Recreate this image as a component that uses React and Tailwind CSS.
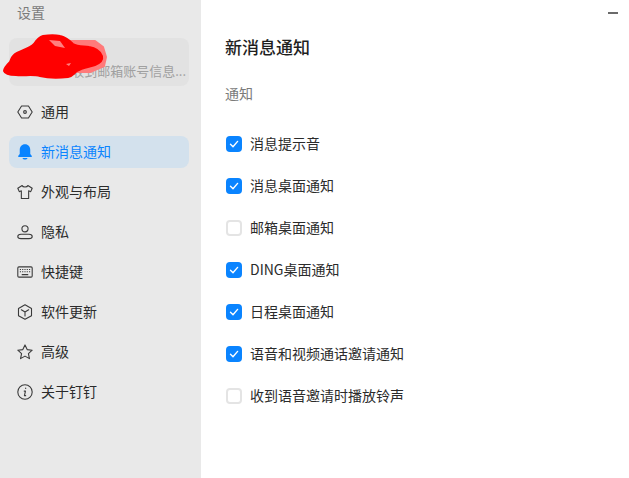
const fontStack = { fontFamily: '"Noto Sans CJK SC", "Liberation Sans", sans-serif' };

function Icon({ children, color = "#3a3a3a" }) {
  return (
    <svg width="16" height="16" viewBox="1 1 14 14" fill="none" stroke={color} strokeWidth="0.95" strokeLinejoin="round" strokeLinecap="round" className="shrink-0">
      {children}
    </svg>
  );
}

const menu = [
  {
    label: "通用",
    icon: (
      <Icon>
        <path d="M5 2.800h6L14.300 8 11 13.200H5L1.700 8z" />
        <circle cx="8" cy="8" r="1.200" />
      </Icon>
    ),
  },
  {
    label: "新消息通知",
    active: true,
    icon: (
      <svg width="16" height="16" viewBox="1 1 14 14" fill="#0a84ff" className="shrink-0">
        <path d="M8 1.300c-2.900 0-4.600 2.200-4.600 4.800v3.600L2 11.600c-.2.400 0 .8.500.8h11c.5 0 .7-.4.500-.8l-1.400-1.900V6.100c0-2.600-1.700-4.800-4.600-4.800z" />
        <path d="M5.800 13.200h4.400c-.3.900-1.100 1.400-2.200 1.400s-1.900-.5-2.200-1.400z" />
      </svg>
    ),
  },
  {
    label: "外观与布局",
    icon: (
      <Icon>
        <path d="M5.500 2.300 1.700 4.700l1.300 3 1.800-.7v6.700h6.400V7l1.800.7 1.300-3-3.800-2.400C10 4 6 4 5.500 2.300z" />
      </Icon>
    ),
  },
  {
    label: "隐私",
    icon: (
      <Icon>
        <circle cx="8" cy="5.200" r="2.700" />
        <path d="M4.500 10h7c1.500 0 2.800.9 2.800 2s-1.300 1.800-2.800 1.800h-7c-1.500 0-2.800-.7-2.800-1.800s1.300-2 2.800-2z" />
      </Icon>
    ),
  },
  {
    label: "快捷键",
    icon: (
      <Icon>
        <rect x="1.700" y="3.500" width="12.600" height="9" rx="1" />
        <path d="M3.500 5.800h9M3.500 7.800h9" strokeDasharray="1 1" strokeLinecap="butt" />
        <path d="M5.500 10.300h5" />
      </Icon>
    ),
  },
  {
    label: "软件更新",
    icon: (
      <Icon>
        <path d="M8 1.700 13.700 5v6.200L8 14.400l-5.700-3.200V5z" />
        <path d="M4.800 6 8 8l3.200-2M8 8v3.500" />
      </Icon>
    ),
  },
  {
    label: "高级",
    icon: (
      <Icon>
        <path d="m8 1.800 1.900 4.100 4.400.5-3.300 3 .9 4.400L8 11.600l-3.900 2.200.9-4.400-3.300-3 4.400-.5z" />
      </Icon>
    ),
  },
  {
    label: "关于钉钉",
    icon: (
      <Icon>
        <circle cx="8" cy="8" r="6.300" />
        <path d="M8.600 4.500v.4M7.300 7.200h1.100l-.9 4h1.100" />
      </Icon>
    ),
  },
];

const options = [
  { label: "消息提示音", checked: true },
  { label: "消息桌面通知", checked: true },
  { label: "邮箱桌面通知", checked: false },
  { label: "DING桌面通知", checked: true },
  { label: "日程桌面通知", checked: true },
  { label: "语音和视频通话邀请通知", checked: true },
  { label: "收到语音邀请时播放铃声", checked: false },
];

function CheckRow({ label, checked }) {
  return (
    <div className="flex items-center h-[42px] pl-[1px]">
      {checked ? (
        <span className="w-4 h-4 rounded-[4px] bg-[#0a84ff] flex items-center justify-center">
          <svg width="12" height="12" viewBox="0 0 12 12" fill="none" stroke="#fff" strokeWidth="1.400" strokeLinecap="round" strokeLinejoin="round">
            <path d="M2.500 6.300 5 8.800l4.600-5.400" />
          </svg>
        </span>
      ) : (
        <span className="w-4 h-4 rounded-[4px] border-2 border-[#e4e4e4] bg-white" />
      )}
      <span className="ml-2 text-sm leading-5 relative top-[-1px] text-[#2b2b2b]">{label}</span>
    </div>
  );
}

export default function App() {
  return (
    <div className="flex w-[629px] h-[478px] bg-white overflow-hidden" style={fontStack}>
      <aside className="w-[201px] shrink-0 bg-[#e9e9e9] pl-[9px] pr-3 pt-[2px]">
        <div className="pl-2 text-sm leading-5 text-[#7b7b7b]">设置</div>

        <div className="relative mt-4 h-12 rounded-lg bg-[#e2e2e2] flex items-end justify-end pr-[3px] pb-[7px]">
          <span className="text-[13px] leading-4 text-[#a0a0a0] whitespace-nowrap">收到邮箱账号信息...</span>
          {/* red marker scribble covering the account name */}
          <svg width="110" height="52" viewBox="0 30 110 52" className="absolute left-[-9px] top-[-8px]">
            <path d="M66 41h29l8 6 3 10-2 9-14 6H66z" fill="#ff7a7a" stroke="#ff7a7a" strokeWidth="2" strokeLinejoin="round" />
            <path d="M43 36c6-1 13-1 17 0 5 1 9 4 13 8 5 3 11 2 16 3 6 1 11 4 13 9 1 4-2 7-7 9-6 2-13 3-18 6-3 2-4 5-9 6-9 1-20 1-28-1-7-2-17 0-24-1-6 0-11-1-12-4 0-3 3-6 6-9 1-3 3-7 7-9 6-3 13-5 17-9 2-3 5-7 9-8z" fill="#ff0000" stroke="#ff0000" strokeWidth="2" strokeLinejoin="round" />
            <path d="M49 40l11 1 5 7-10-2z" fill="#ff8080" />
            <path d="M66 64l5-1-2 3z" fill="#ff8080" />
          </svg>
        </div>

        <nav className="mt-[10px] flex flex-col gap-2">
          {menu.map((item) => (
            <div
              key={item.label}
              className={`flex items-center h-8 pl-2 rounded-lg text-sm ${item.active ? "bg-[#d3e1ed] text-[#0a84ff]" : "text-[#2b2b2b]"}`}
            >
              {item.icon}
              <span className="ml-2 leading-5 relative top-[-1px]">{item.label}</span>
            </div>
          ))}
        </nav>
      </aside>

      <main className="relative flex-1 pl-6">
        <span className="absolute right-[11px] top-[12px] w-[10px] h-[2px] bg-[#6a6a6a]" />
        <h1 className="mt-[35px] text-[17px] leading-[24px] font-medium text-[#1f1f1f]">新消息通知</h1>
        <div className="mt-[24px] text-sm leading-5 text-[#7b7b7b]">通知</div>
        <div className="mt-[20px]">
          {options.map((opt) => (
            <CheckRow key={opt.label} label={opt.label} checked={opt.checked} />
          ))}
        </div>
      </main>
    </div>
  );
}
